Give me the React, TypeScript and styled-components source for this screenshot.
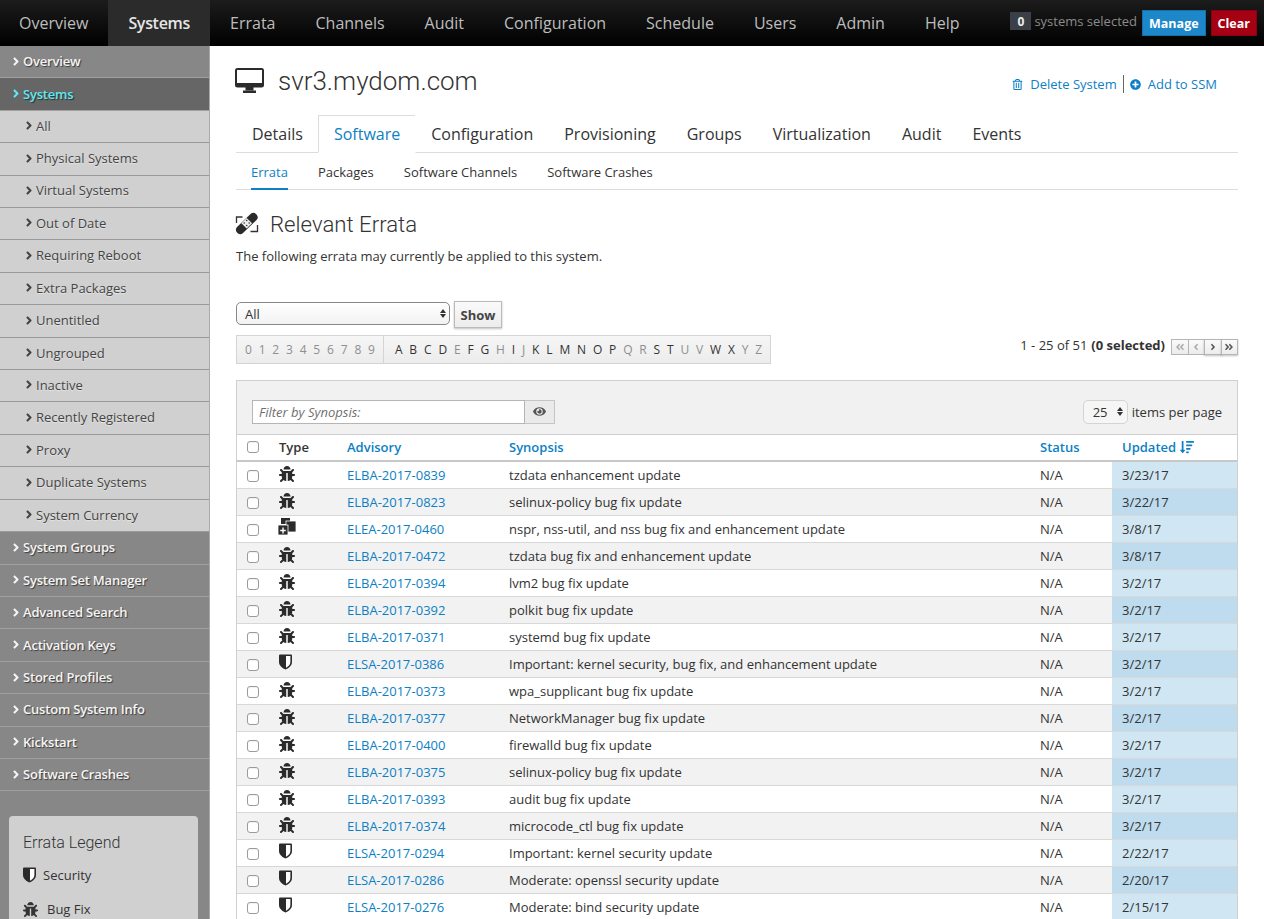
import React from "react";
import styled, { createGlobalStyle } from "styled-components";
import { FaBug, FaRegTrashAlt, FaPlusCircle, FaEye, FaSortAmountDown, FaAngleRight, FaAngleLeft, FaAngleDoubleLeft, FaAngleDoubleRight } from "react-icons/fa";

const Global = createGlobalStyle`
  html, body { margin: 0; padding: 0; height: 100%; overflow: hidden; background: #fff; }
  body { font-family: "Open Sans", "Liberation Sans", sans-serif; font-size: 13px; color: #333; }
  * { box-sizing: border-box; }
`;

const Page = styled.div`
  width: 1264px; height: 919px; display: flex; flex-direction: column; overflow: hidden;
`;
const TopBar = styled.header`
  height: 46px; flex: none; display: flex; align-items: stretch;
  background: linear-gradient(#1c1c1c, #000);
`;
const TopItem = styled.div<{ $active?: boolean; $first?: boolean }>`
  padding: 0 20px 1px ${(p) => (p.$first ? "19px" : "20px")}; display: flex; align-items: center; font-size: 16px;
  color: ${(p) => (p.$active ? "#e6e6e6" : "#bdbdbd")};
  font-weight: ${(p) => (p.$active ? 600 : 400)};
  letter-spacing: ${(p) => (p.$active ? "-0.3px" : "0")};
  background: ${(p) => (p.$active ? "#2b2b2b" : "transparent")};
`;
const SelectedArea = styled.div`
  margin-left: auto; display: flex; align-items: flex-start; padding: 10px 7px 0 0; gap: 5px;
`;
const Count = styled.span`
  min-width: 21px; height: 18px; margin-top: 2px; background: #3b3f47; color: #eee; font-weight: 700; font-size: 12px;
  display: flex; align-items: center; justify-content: center;
`;
const CountLabel = styled.span`color: #8b8b8b; font-size: 13px; line-height: 22px; margin-left: -2px;`;
const TopButton = styled.div<{ $bg: string; $border: string }>`
  height: 26px; padding: 0 6px; display: flex; align-items: center; font-weight: 700; font-size: 12.5px; color: #fff;
  background: ${(p) => p.$bg}; border: 1px solid ${(p) => p.$border};
`;
const Body = styled.div`flex: 1; display: flex; min-height: 0;`;
const Side = styled.nav`
  width: 210px; flex: none; background: #878787; border-right: 1px solid #aaa; overflow: hidden;
`;
const SideRow = styled.div<{ $kind: "top" | "sel" | "sub" }>`
  height: 32.42px; display: flex; align-items: center; gap: 0;
  padding: 0 0 ${(p) => (p.$kind === "sub" ? "1.7px" : "0.8px")} ${(p) => (p.$kind === "sub" ? "24px" : "11px")};
  font-size: 13px;
  letter-spacing: ${(p) => (p.$kind === "sub" ? "0" : "-0.2px")};
  font-weight: ${(p) => (p.$kind === "sub" ? 400 : 600)};
  color: ${(p) => (p.$kind === "sub" ? "#444" : p.$kind === "sel" ? "#5fe8f2" : "#f4f4f4")};
  text-shadow: ${(p) => (p.$kind === "sub" ? "0 1px 1px rgba(255,255,255,.5)" : "1px 1px 1px rgba(0,0,0,.55)")};
  background: ${(p) => (p.$kind === "sub" ? "#d0d0d0" : p.$kind === "sel" ? "#666" : "#878787")};
  border-bottom: 1px solid ${(p) => (p.$kind === "sub" ? "#999" : "#a0a0a0")};
  svg { font-size: 13px; width: 12px; margin-left: -1px; margin-right: 1px; flex: none; }
`;
const Legend = styled.div`
  margin: 25px 11px 0 9px; height: 200px; background: #d0d0d0; border-radius: 4px; padding: 17px 14px 0;
`;
const LegendTitle = styled.div`font-family: Roboto, sans-serif; font-weight: 300; font-size: 16px; color: #333; margin-bottom: 6px;`;
const LegendRow = styled.div<{ $gap: number }>`
  display: flex; align-items: center; gap: ${(p) => p.$gap}px; height: 34px; font-size: 13px; color: #333;
  svg { font-size: 15px; flex: none; }
`;
const Main = styled.main`flex: 1; padding: 0 26px; min-width: 0; overflow: hidden;`;
const TitleRow = styled.div`height: 69px; display: flex; align-items: center;`;
const TitleIconBox = styled.span`display: flex; margin: 0 14px 0 -1px;`;
const H1 = styled.h1`margin: 0; font-family: Roboto, sans-serif; font-weight: 300; font-size: 26px; color: #333;`;
const TitleActions = styled.div`
  margin-left: auto; display: flex; align-items: center; color: #0d7fc4; padding: 7px 15px 0 0; font-size: 13px;
`;
const ActionLink = styled.span`
  display: flex; align-items: center; gap: 7px; padding: 0 6px; height: 18px;
  svg { font-size: 11px; }
  & + & { border-left: 1px solid #666; }
`;
const Tabs = styled.div`display: flex; height: 38px; border-bottom: 1px solid #ddd;`;
const TabItem = styled.div<{ $active?: boolean }>`
  height: ${(p) => (p.$active ? "38px" : "37px")}; padding: 0 15px; display: flex; align-items: center; font-size: 16px;
  color: ${(p) => (p.$active ? "#0d7fc4" : "#333")};
  background: #fff; border: 1px solid ${(p) => (p.$active ? "#ddd" : "transparent")};
  border-bottom-color: ${(p) => (p.$active ? "#fff" : "transparent")};
  margin-right: -1px;
`;
const SubTabs = styled.div`display: flex; height: 37px; gap: 30px; padding-left: 15px; border-bottom: 1px solid #ddd;`;
const SubTab = styled.div<{ $active?: boolean }>`
  height: 37px; padding-top: 3px; display: flex; align-items: center; font-size: 13px;
  color: ${(p) => (p.$active ? "#0d7fc4" : "#333")};
  border-bottom: 2px solid ${(p) => (p.$active ? "#0d7fc4" : "transparent")};
`;
const H2Row = styled.div`display: flex; align-items: center; gap: 11px; height: 70px; padding-bottom: 3px; svg { margin-left: -1px; }`;
const H2 = styled.h2`margin: 0; font-family: Roboto, sans-serif; font-weight: 300; font-size: 22.2px; color: #333;`;
const Desc = styled.p`margin: -13px 0 0; font-size: 13px; line-height: 18px; color: #333;`;
const FormRow = styled.div`display: flex; align-items: center; gap: 4px; margin-top: 36px; height: 27px;`;
const SelectBox = styled.div`
  width: 214px; height: 23px; margin-bottom: 2px; border: 1px solid #888; border-radius: 5px; display: flex; align-items: center; justify-content: space-between;
  padding: 0 3px 0 8px; font-size: 13px; background: linear-gradient(#fff, #f2f2f2); color: #333;
`;
const Spin = styled.span`display: inline-flex; flex-direction: column; gap: 1px;
  &::before { content: ""; border: 3px solid transparent; border-top: 0; border-bottom: 4px solid #333; }
  &::after { content: ""; border: 3px solid transparent; border-bottom: 0; border-top: 4px solid #333; }
`;
const ShowButton = styled.div`
  width: 48px; height: 27px; border: 1px solid #bbb; background: linear-gradient(#fafafa, #ececec); display: flex; align-items: center; justify-content: center;
  font-weight: 700; font-size: 13px; color: #444; box-shadow: 0 1px 2px rgba(0,0,0,.25);
`;
const PagerRow = styled.div`display: flex; justify-content: space-between; align-items: flex-start; margin-top: 7px;`;
const Alpha = styled.div`
  display: flex; height: 29px; border: 1px solid #d4d4d4; background: linear-gradient(#f6f6f6, #ececec); font-size: 12px;
`;
const AlphaGroup = styled.div`
  display: flex; align-items: center; padding: 0 8px; gap: 6.8px; & + & { border-left: 1px solid #d4d4d4; padding: 0 8px 0 11px; gap: 6.85px; }
`;
const Ch = styled.span<{ $on?: boolean }>`color: ${(p) => (p.$on ? "#333" : "#8f8f8f")};`;
const PagerInfo = styled.div`display: flex; align-items: center; height: 20px; font-size: 13px; color: #333; b { margin-left: 4px; font-weight: 700; }`;
const PagerBtns = styled.div`display: flex; margin-left: 7px; margin-top: 4px; height: 16px;`;
const PagerBtn = styled.div<{ $on?: boolean }>`
  width: 17.5px; height: 16px; border: 1px solid #b5b5b5; margin-left: -1px; display: flex; align-items: center; justify-content: center;
  background: linear-gradient(#fafafa, #ececec); color: ${(p) => (p.$on ? "#555" : "#aaa")}; font-size: 10px;
  box-shadow: ${(p) => (p.$on ? "0 1px 2px rgba(0,0,0,.25)" : "none")};
`;
const Panel = styled.section`margin-top: 16px; border: 1px solid #d0d0d0; border-bottom: 0;`;
const Toolbar = styled.div`
  height: 54px; background: #f1f1f1; display: flex; align-items: center; justify-content: space-between; padding: 8px 15px 0; border-bottom: 1px solid #d0d0d0;
`;
const FilterGroup = styled.div`display: flex; height: 24px;`;
const FilterInput = styled.div`
  width: 273px; height: 24px; background: #fff; border: 1px solid #b5b5b5; display: flex; align-items: center; padding-left: 6px;
  font-size: 13px; font-style: italic; color: #6f6f6f;
`;
const EyeBtn = styled.div`
  width: 30px; height: 24px; border: 1px solid #c4c4c4; border-left: 0; background: #eaeaea; display: flex; align-items: center; justify-content: center;
  color: #555; font-size: 13px;
`;
const PerPage = styled.div`display: flex; align-items: center; gap: 4px; font-size: 13px;`;
const PerSelect = styled.div`
  width: 45px; height: 24px; border: 1px solid #d4d4d4; border-radius: 5px; background: #f6f6f6; display: flex; align-items: center; justify-content: space-between; padding: 0 4px 0 9px;
`;
const Grid = styled.div`
  display: grid; grid-template-columns: 32px 68px 162px 531px 82px 1fr;
`;
const HeadCell = styled.div<{ $link?: boolean }>`
  height: 27px; display: flex; align-items: center; gap: 4px; padding: 0 0 2px 10px; font-size: 13px; font-weight: 600; background: #fff;
  border-bottom: 2px solid #c8c8c8; color: ${(p) => (p.$link ? "#0d7fc4" : "#333")};
  svg { font-size: 14px; }
`;
const Cell = styled.div<{ $alt: boolean; $hl?: boolean }>`
  height: 27px; display: flex; align-items: center; padding-left: 10px; font-size: 13px; color: #333; border-bottom: 1px solid #d8d8d8;
  background: ${(p) => p.$hl ? (p.$alt ? "#bedcee" : "#d0e7f3") : p.$alt ? "#f2f2f2" : "#fff"};
`;
const LinkCell = styled(Cell)`color: #0d7fc4;`;
const IconCell = styled(Cell)`align-items: flex-start; padding-top: 4px; font-size: 16px; color: #2b2b2b;`;
const Check = styled.span`
  width: 12px; height: 12px; margin-top: 1px; border: 1px solid #9b9b9b; border-radius: 3px; background: #fff; display: block; box-shadow: inset 0 1px 1px rgba(0,0,0,.06);
`;
const EnhBox = styled.span`display: flex; margin: -2px 0 0 -1px;`;
const ShieldBox = styled.span`display: flex; margin: -1px 0 0 0;`;

const Enh = () => (
  <EnhBox>
    <svg width="18" height="17" viewBox="0 0 18 17" fill="#2b2b2b">
      <rect x="3" y="0" width="9" height="6" />
      <rect x="8" y="3" width="10" height="11" stroke="#fff" strokeWidth=".8" />
      <rect x="0" y="7" width="10" height="10" stroke="#fff" strokeWidth=".8" />
      <path d="M4.3 9.6h1.4v2.2h2.1v1.4H5.7v2.2H4.3v-2.2H2.2v-1.4h2.1z" fill="#fff" />
    </svg>
  </EnhBox>
);
const Shield = () => (
  <ShieldBox>
    <svg width="13" height="16" viewBox="0 0 13 16">
      <path d="M0 1.2Q0 .4 1 .4h11q1 0 1 .8V8c0 4-3.8 6.4-6.5 7.6C3.8 14.4 0 12 0 8z" fill="#2b2b2b" />
      <path d="M7 2h4.4v6c0 2.8-2.4 4.6-4.4 5.7z" fill="#fff" />
    </svg>
  </ShieldBox>
);
const Monitor = () => (
  <TitleIconBox>
    <svg width="29" height="25" viewBox="0 0 29 25" fill="#2b2b2b">
      <path fillRule="evenodd" d="M2.5 0h24A2.5 2.5 0 0 1 29 2.5V17a2.5 2.5 0 0 1-2.5 2.5h-24A2.5 2.5 0 0 1 0 17V2.5A2.5 2.5 0 0 1 2.5 0zM2 2v13h25V2z" />
      <rect x="10.5" y="19" width="8" height="3.5" />
      <rect x="8" y="22.5" width="13" height="2.5" />
    </svg>
  </TitleIconBox>
);
const Patch = () => (
  <svg width="24" height="24" viewBox="0 0 24 24">
    <path d="M1.5 11V5h6M22.5 13v6.5h-7" fill="none" stroke="#333" strokeWidth="1.3" />
    <path d="M2 15 15 2.5a4 4 0 0 1 6.5 0 4 4 0 0 1 0 5.5L8 21a4 4 0 0 1-5.5 0 4 4 0 0 1-.5-6z" fill="#2b2b2b" />
    <rect x="8" y="7.5" width="7.5" height="7.5" transform="rotate(45 11.7 11.2)" fill="#eee" />
    <g fill="#333"><circle cx="11.7" cy="8.5" r=".8" /><circle cx="9.2" cy="11" r=".8" /><circle cx="14.2" cy="11" r=".8" /><circle cx="11.7" cy="13.5" r=".8" /></g>
  </svg>
);

const nav = ["Overview", "Systems", "Errata", "Channels", "Audit", "Configuration", "Schedule", "Users", "Admin", "Help"];
const subs = ["All", "Physical Systems", "Virtual Systems", "Out of Date", "Requiring Reboot", "Extra Packages", "Unentitled", "Ungrouped", "Inactive", "Recently Registered", "Proxy", "Duplicate Systems", "System Currency"];
const tops = ["System Groups", "System Set Manager", "Advanced Search", "Activation Keys", "Stored Profiles", "Custom System Info", "Kickstart", "Software Crashes"];
const tabs = ["Details", "Software", "Configuration", "Provisioning", "Groups", "Virtualization", "Audit", "Events"];
const subTabs = ["Errata", "Packages", "Software Channels", "Software Crashes"];
const digits = "0123456789".split("");
const letters = "ABCDEFGHIJKLMNOPQRSTUVWXYZ".split("");
const offLetters = "EHJQRUVYZ".split("");
const rows: [string, string, string, string][] = [
  ["b", "ELBA-2017-0839", "tzdata enhancement update", "3/23/17"],
  ["b", "ELBA-2017-0823", "selinux-policy bug fix update", "3/22/17"],
  ["e", "ELEA-2017-0460", "nspr, nss-util, and nss bug fix and enhancement update", "3/8/17"],
  ["b", "ELBA-2017-0472", "tzdata bug fix and enhancement update", "3/8/17"],
  ["b", "ELBA-2017-0394", "lvm2 bug fix update", "3/2/17"],
  ["b", "ELBA-2017-0392", "polkit bug fix update", "3/2/17"],
  ["b", "ELBA-2017-0371", "systemd bug fix update", "3/2/17"],
  ["s", "ELSA-2017-0386", "Important: kernel security, bug fix, and enhancement update", "3/2/17"],
  ["b", "ELBA-2017-0373", "wpa_supplicant bug fix update", "3/2/17"],
  ["b", "ELBA-2017-0377", "NetworkManager bug fix update", "3/2/17"],
  ["b", "ELBA-2017-0400", "firewalld bug fix update", "3/2/17"],
  ["b", "ELBA-2017-0375", "selinux-policy bug fix update", "3/2/17"],
  ["b", "ELBA-2017-0393", "audit bug fix update", "3/2/17"],
  ["b", "ELBA-2017-0374", "microcode_ctl bug fix update", "3/2/17"],
  ["s", "ELSA-2017-0294", "Important: kernel security update", "2/22/17"],
  ["s", "ELSA-2017-0286", "Moderate: openssl security update", "2/20/17"],
  ["s", "ELSA-2017-0276", "Moderate: bind security update", "2/15/17"],
];

export default function App() {
  return (
    <Page>
      <Global />
      <TopBar>
        {nav.map((n, i) => (
          <TopItem key={n} $active={n === "Systems"} $first={i === 0}>{n}</TopItem>
        ))}
        <SelectedArea>
          <Count>0</Count>
          <CountLabel>systems selected</CountLabel>
          <TopButton $bg="#1c87c9" $border="#1670a8">Manage</TopButton>
          <TopButton $bg="#a50013" $border="#8a0010">Clear</TopButton>
        </SelectedArea>
      </TopBar>
      <Body>
        <Side>
          <SideRow $kind="top"><FaAngleRight />Overview</SideRow>
          <SideRow $kind="sel"><FaAngleRight />Systems</SideRow>
          {subs.map((s) => <SideRow key={s} $kind="sub"><FaAngleRight />{s}</SideRow>)}
          {tops.map((s) => <SideRow key={s} $kind="top"><FaAngleRight />{s}</SideRow>)}
          <Legend>
            <LegendTitle>Errata Legend</LegendTitle>
            <LegendRow $gap={7}><Shield />Security</LegendRow>
            <LegendRow $gap={9}><FaBug />Bug Fix</LegendRow>
          </Legend>
        </Side>
        <Main>
          <TitleRow>
            <Monitor />
            <H1>svr3.mydom.com</H1>
            <TitleActions>
              <ActionLink><FaRegTrashAlt />Delete System</ActionLink>
              <ActionLink><FaPlusCircle />Add to SSM</ActionLink>
            </TitleActions>
          </TitleRow>
          <Tabs>
            {tabs.map((t) => <TabItem key={t} $active={t === "Software"}>{t}</TabItem>)}
          </Tabs>
          <SubTabs>
            {subTabs.map((t) => <SubTab key={t} $active={t === "Errata"}>{t}</SubTab>)}
          </SubTabs>
          <H2Row><Patch /><H2>Relevant Errata</H2></H2Row>
          <Desc>The following errata may currently be applied to this system.</Desc>
          <FormRow>
            <SelectBox>All<Spin /></SelectBox>
            <ShowButton>Show</ShowButton>
          </FormRow>
          <PagerRow>
            <Alpha>
              <AlphaGroup>{digits.map((d) => <Ch key={d}>{d}</Ch>)}</AlphaGroup>
              <AlphaGroup>{letters.map((l) => <Ch key={l} $on={!offLetters.includes(l)}>{l}</Ch>)}</AlphaGroup>
            </Alpha>
            <PagerInfo>
              1 - 25 of 51 <b>(0 selected)</b>
              <PagerBtns>
                <PagerBtn><FaAngleDoubleLeft /></PagerBtn>
                <PagerBtn><FaAngleLeft /></PagerBtn>
                <PagerBtn $on><FaAngleRight /></PagerBtn>
                <PagerBtn $on><FaAngleDoubleRight /></PagerBtn>
              </PagerBtns>
            </PagerInfo>
          </PagerRow>
          <Panel>
            <Toolbar>
              <FilterGroup>
                <FilterInput>Filter by Synopsis:</FilterInput>
                <EyeBtn><FaEye /></EyeBtn>
              </FilterGroup>
              <PerPage><PerSelect>25<Spin /></PerSelect>items per page</PerPage>
            </Toolbar>
            <Grid>
              <HeadCell><Check /></HeadCell>
              <HeadCell>Type</HeadCell>
              <HeadCell $link>Advisory</HeadCell>
              <HeadCell $link>Synopsis</HeadCell>
              <HeadCell $link>Status</HeadCell>
              <HeadCell $link>Updated <FaSortAmountDown /></HeadCell>
              {rows.map((r, i) => {
                const alt = i % 2 === 1;
                return (
                  <React.Fragment key={r[1]}>
                    <Cell $alt={alt}><Check /></Cell>
                    <IconCell $alt={alt}>{r[0] === "b" ? <FaBug /> : r[0] === "s" ? <Shield /> : <Enh />}</IconCell>
                    <LinkCell $alt={alt}>{r[1]}</LinkCell>
                    <Cell $alt={alt}>{r[2]}</Cell>
                    <Cell $alt={alt}>N/A</Cell>
                    <Cell $alt={alt} $hl>{r[3]}</Cell>
                  </React.Fragment>
                );
              })}
            </Grid>
          </Panel>
        </Main>
      </Body>
    </Page>
  );
}
